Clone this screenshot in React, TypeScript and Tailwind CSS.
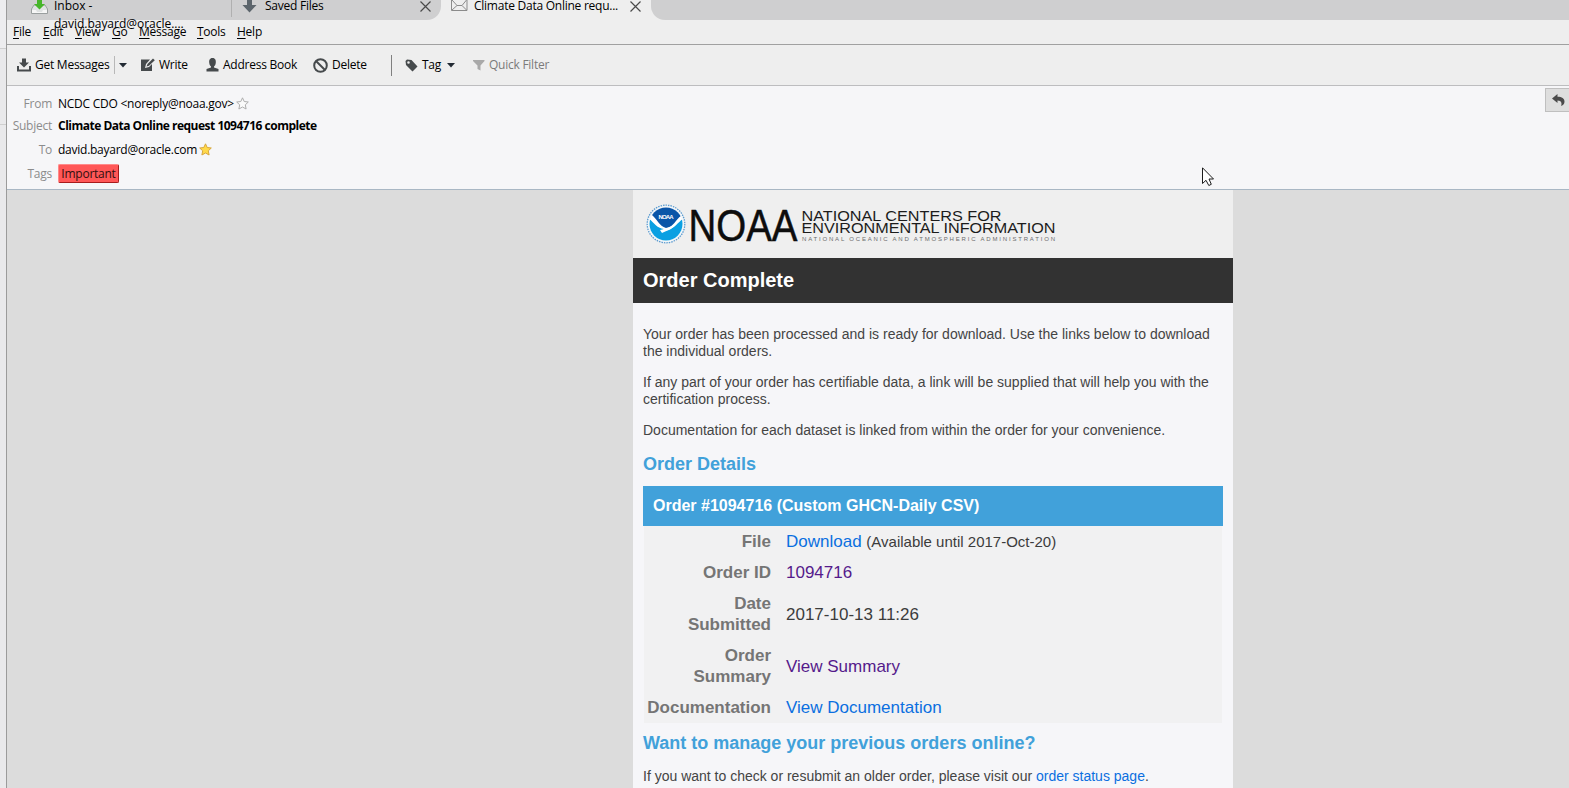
import React from "react";

const Close = () => (
  <svg width="11" height="11" viewBox="0 0 11 11" className="block shrink-0">
    <path d="M0.5 0.5L10.5 10.5M10.5 0.5L0.5 10.5" stroke="#4a4a4a" strokeWidth="1.2" />
  </svg>
);

const Caret = () => (
  <svg width="8" height="5" viewBox="0 0 8 5" className="block shrink-0">
    <path d="M0 0H8L4 4.5Z" fill="#222a33" />
  </svg>
);

function TabBar() {
  return (
    <div className="flex h-5 text-[12px]">
      <div className="flex h-5 w-[434px] rounded-br-[14px] bg-[#cfcfd0]">
        <div className="flex h-[17px] w-[225px] border-r border-[#b0b0b0] pl-[24px]">
          <svg width="17" height="14" viewBox="0 0 17 14" className="block shrink-0">
            <path d="M3 5L0.5 9V13.5H16.5V9L14 5Z" fill="#dfe2e2" stroke="#9a9f9f" />
            <path d="M1 10H5L6 12H11L12 10H16V13H1Z" fill="#f6f6f6" />
            <path d="M6 0H11V4H14L8.500 9.500L3 4H6Z" fill="#46b52a" />
          </svg>
          <div className="ml-[6px] w-[164px] -mt-[3px] leading-[18px] tracking-[-0.02px]">Inbox - david.bayard@oracle....</div>
        </div>
        <div className="flex h-5 w-[209px] pl-[10px]">
          <svg width="15" height="13" viewBox="0 0 15 13" className="block shrink-0">
            <path d="M5 0H10V5H14.500L7.500 12.500L0.500 5H5Z" fill="#5c656c" />
          </svg>
          <div className="ml-[8px] w-[155px] -mt-[3px] leading-[18px] tracking-[-0.25px]">Saved Files</div>
          <div className="pt-px"><Close /></div>
        </div>
      </div>
      <div className="flex w-[210px] pl-[10px]">
        <svg width="17" height="11" viewBox="0 0 17 11" className="block shrink-0">
          <path d="M0.500 -2V10.500H16V-2M1 0L6 5.500H11L15.500 0M1 10L6 5.500M15.500 10L11 5.500" fill="none" stroke="#8b8b8b" />
        </svg>
        <div className="ml-[6px] w-[156px] -mt-[3px] leading-[18px] tracking-[-0.25px]">Climate Data Online requ...</div>
        <div className="pt-px"><Close /></div>
      </div>
      <div className="h-5 flex-1 rounded-bl-[14px] bg-[#cfcfd0]" />
    </div>
  );
}

const MenuItem = ({ text, className }: { text: string; className: string }) => (
  <div className={className}>
    <span className="underline underline-offset-2">{text[0]}</span>
    {text.slice(1)}
  </div>
);

function MenuBar() {
  return (
    <div className="flex h-[25px] border-b border-[#a0a0a0] pl-[6px] text-[12px] leading-[24px] tracking-[-0.25px]">
      <MenuItem text="File" className="w-[30px]" />
      <MenuItem text="Edit" className="w-[32px]" />
      <MenuItem text="View" className="w-[37px]" />
      <MenuItem text="Go" className="w-[27px]" />
      <MenuItem text="Message" className="w-[58px]" />
      <MenuItem text="Tools" className="w-[40px]" />
      <MenuItem text="Help" className="w-[40px]" />
    </div>
  );
}

function Toolbar() {
  return (
    <div className="flex h-[41px] items-center border-b border-[#bdbdbf] pl-[10px] text-[12px] tracking-[-0.25px]">
      <svg width="14" height="14" viewBox="0 0 14 14" className="block shrink-0">
        <path d="M5 0.500H9V4.500H12L7 9.500L2 4.500H5Z" fill="#464a4c" />
        <path d="M1 8V12.500H13V8" fill="none" stroke="#464a4c" strokeWidth="2" />
      </svg>
      <div className="ml-[4px] w-[79px]">Get Messages</div>
      <div className="h-[18px] w-px bg-[#b8b8b8]" />
      <div className="ml-[4px] w-[22px]"><Caret /></div>
      <svg width="14" height="14" viewBox="0 0 14 14" className="block shrink-0">
        <path d="M0 1.500H9L5 6L4 10L8 9L11 6V13H0Z" fill="#464a4c" />
        <path d="M5.500 8.500L6.500 6L12 0.500L13.800 2.200L8 7.800Z" fill="#464a4c" />
      </svg>
      <div className="ml-[4px] w-[47px]">Write</div>
      <svg width="13" height="14" viewBox="0 0 13 14" className="block shrink-0">
        <path d="M6.500 0C9.500 0 10 2.500 9.800 4.500C9.700 6.500 9 7.500 8 8.500V9.500L12.500 11V13.500H0.500V11L5 9.500V8.500C4 7.500 3.300 6.500 3.200 4.500C3 2.500 3.500 0 6.500 0Z" fill="#464a4c" />
      </svg>
      <div className="ml-[4px] w-[90px]">Address Book</div>
      <svg width="15" height="15" viewBox="0 0 15 15" className="block shrink-0">
        <circle cx="7.500" cy="7.500" r="6.300" fill="none" stroke="#464a4c" strokeWidth="2" />
        <path d="M3 3L12 12" stroke="#464a4c" strokeWidth="2" />
      </svg>
      <div className="ml-[4px] w-[59px]">Delete</div>
      <div className="h-[21px] w-px bg-[#808080]" />
      <svg width="13" height="13" viewBox="0 0 13 13" className="ml-[13px] block shrink-0">
        <path fillRule="evenodd" d="M0.500 2L2 0.500L6.500 1L12.500 7.500L7.500 12.500L1 6ZM3.500 2.200A1.300 1.300 0 1 0 3.500 4.800A1.300 1.300 0 1 0 3.500 2.200Z" fill="#464a4c" />
      </svg>
      <div className="ml-[4px] w-[25px]">Tag</div>
      <Caret />
      <svg width="12" height="11" viewBox="0 0 12 11" className="ml-[18px] block shrink-0">
        <path d="M0 0H11.500V1L7.500 5.500V10.500L4.500 9V5.500L0 1Z" fill="#a9a9a9" />
      </svg>
      <div className="ml-[4px] text-[#7b7b7b]">Quick Filter</div>
    </div>
  );
}

const Star = ({ fill, stroke }: { fill: string; stroke: string }) => (
  <svg width="13" height="13" viewBox="0 0 13 13" className="mt-[5px] ml-[2px] block shrink-0">
    <path d="M6.500 0.800L8.200 4.500L12.300 5L9.300 7.800L10.100 12L6.500 10L2.900 12L3.700 7.800L0.700 5L4.800 4.500Z" fill={fill} stroke={stroke} />
  </svg>
);

function Header() {
  return (
    <div className="flex h-[104px] justify-between border-b border-[#a9b7c4] bg-[#f6f6f8] text-[12px]">
      <div className="pt-[6px] leading-[24px] tracking-[-0.25px]">
        <div className="flex h-[22px]">
          <div className="mr-[6px] w-[45px] text-right text-[#8c8c8c]">From</div>
          <div>NCDC CDO &lt;noreply@noaa.gov&gt;</div>
          <Star fill="#fafafa" stroke="#adadad" />
        </div>
        <div className="flex h-[24px]">
          <div className="mr-[6px] w-[45px] text-right text-[#8c8c8c]">Subject</div>
          <div className="font-bold tracking-[-0.5px]">Climate Data Online request 1094716 complete</div>
        </div>
        <div className="flex h-[24px]">
          <div className="mr-[6px] w-[45px] text-right text-[#8c8c8c]">To</div>
          <div>david.bayard@oracle.com</div>
          <Star fill="#ffd94a" stroke="#d7a63c" />
        </div>
        <div className="flex h-[24px]">
          <div className="mr-[6px] w-[45px] text-right text-[#8c8c8c]">Tags</div>
          <div className="mt-[2px] h-[19px] w-[61px] rounded-[2px] border border-t-[#ff8a8a] border-r-[#a81c1c] border-b-[#a81c1c] border-l-[#ff8a8a] bg-[#ff5757] text-center leading-[17px] text-[#32100f]">Important</div>
        </div>
      </div>
      <div className="mt-[2px] flex h-[24px] w-[24px] items-center border border-r-0 border-[#bfbfbf] bg-[#dedede] pl-[6px]">
        <svg width="13" height="12" viewBox="0 0 13 12" className="block">
          <path d="M0 4.500L5.500 0V2.800C10 2.800 12.500 4.500 12.500 7.500C12.500 9.500 11.500 11 9 12C10 10 10 6.500 5.500 6.500V9Z" fill="#4b4b4b" />
        </svg>
      </div>
    </div>
  );
}

function Logo() {
  return (
    <svg width="420" height="44" viewBox="0 0 420 44" className="block" fontFamily="Liberation Sans, Arial, sans-serif">
      <defs>
        <clipPath id="disc"><circle cx="20" cy="22" r="16.500" /></clipPath>
      </defs>
      <circle cx="20" cy="22" r="18.800" fill="#f3f6f8" stroke="#5b9bd0" strokeWidth="1.300" strokeDasharray="1.500 1" />
      <g clipPath="url(#disc)">
        <rect x="2" y="4" width="36" height="36" fill="#fff" />
        <path d="M5 4H35V14C30 17 28 25 20 26C13 24 11 17 6 13Z" fill="#0a55a8" />
        <path d="M2 16C8 20 10 26 18 27L15 29L22 28C29 26 32 20 38 16V42H2Z" fill="#0aa0e2" />
        <path d="M14 28C20 27 25 25 29 22C26 28 20 29 16 31Z" fill="#fff" />
      </g>
      <text x="12.500" y="17" fontSize="6" fontWeight="bold" fill="#fff" textLength="15">NOAA</text>
      <text x="42.500" y="38.800" fontSize="44" fill="#0d0d0d" stroke="#0d0d0d" strokeWidth="0.500" textLength="109" lengthAdjust="spacingAndGlyphs">NOAA</text>
      <text x="155.500" y="18.800" fontSize="15" fill="#1c1c1c" textLength="200" lengthAdjust="spacingAndGlyphs">NATIONAL CENTERS FOR</text>
      <text x="155.500" y="31" fontSize="15" fill="#1c1c1c" textLength="254" lengthAdjust="spacingAndGlyphs">ENVIRONMENTAL INFORMATION</text>
      <text x="156" y="38.800" fontSize="6" fill="#6d6d6d" textLength="253">NATIONAL OCEANIC AND ATMOSPHERIC ADMINISTRATION</text>
    </svg>
  );
}

const Row = ({ label, children }: { label: React.ReactNode; children: React.ReactNode }) => (
  <div className="flex items-center py-[5px] leading-[21px]">
    <div className="w-[127px] shrink-0 text-right font-bold text-[#757575]">{label}</div>
    <div className="ml-[15px] text-[#3c3c3c]">{children}</div>
  </div>
);

function Email() {
  return (
    <div className="ml-[626px] h-[598px] w-[600px] bg-[#f6f6f9] font-['Liberation_Sans',Arial,sans-serif] text-[#444]">
      <div className="h-[68px] bg-[#efefef] pt-[12px] pl-[13px]"><Logo /></div>
      <div className="h-[45px] bg-[#323232] pl-[10px] text-[20px] leading-[44px] font-bold text-white">Order Complete</div>
      <div className="px-[10px] pt-[23px]">
        <div className="flex flex-col gap-[14px] text-[14px] leading-[17px]">
          <p>Your order has been processed and is ready for download. Use the links below to download<br />the individual orders.</p>
          <p>If any part of your order has certifiable data, a link will be supplied that will help you with the<br />certification process.</p>
          <p>Documentation for each dataset is linked from within the order for your convenience.</p>
        </div>
        <h2 className="mt-[14px] text-[18px] leading-[22px] font-bold text-[#41a1da]">Order Details</h2>
        <div className="mt-[11px] h-[40px] bg-[#41a1da] pl-[10px] text-[16px] leading-[39px] font-bold text-white">Order #1094716 (Custom GHCN-Daily CSV)</div>
        <div className="mx-px bg-[#f1f1f2] text-[17px]">
          <Row label="File"><span className="text-[#0b6fe0]">Download</span> <span className="text-[15px]">(Available until 2017-Oct-20)</span></Row>
          <Row label="Order ID"><span className="text-[#551a8b]">1094716</span></Row>
          <Row label={<>Date<br />Submitted</>}>2017-10-13 11:26</Row>
          <Row label={<>Order<br />Summary</>}><span className="text-[#551a8b]">View Summary</span></Row>
          <Row label="Documentation"><span className="text-[#0b6fe0]">View Documentation</span></Row>
        </div>
        <h2 className="mt-[9px] text-[18px] leading-[22px] font-bold text-[#41a1da]">Want to manage your previous orders online?</h2>
        <p className="mt-[14px] text-[14px] leading-[17px]">If you want to check or resubmit an older order, please visit our <span className="text-[#0b6fe0]">order status page</span>.</p>
      </div>
    </div>
  );
}

export default function App() {
  return (
    <div className="relative flex h-[788px] w-[1569px] overflow-hidden bg-[#eeeeee] font-['Open_Sans','Noto_Sans',sans-serif] text-black">
      <div className="flex w-[7px] shrink-0 flex-col border-r border-[#9b9b9b] bg-[#e9e9eb]">
        <div className="h-[49px] border-b border-[#cfcfcf] bg-[#ededef]" />
        <div className="h-[76px] border-b border-[#cfcfcf]" />
      </div>
      <div className="flex flex-1 flex-col">
        <TabBar />
        <MenuBar />
        <Toolbar />
        <Header />
        <div className="flex-1 overflow-hidden bg-[#dcdcdc]"><Email /></div>
      </div>
      <svg width="13" height="20" viewBox="0 0 13 20" className="absolute top-[167px] left-[1202px]">
        <path d="M0.500 0.800V16.500L4 13.300L6.800 18.500L9.300 17.300L7 12H11.500Z" fill="#fff" stroke="#1c1c1c" />
      </svg>
    </div>
  );
}
